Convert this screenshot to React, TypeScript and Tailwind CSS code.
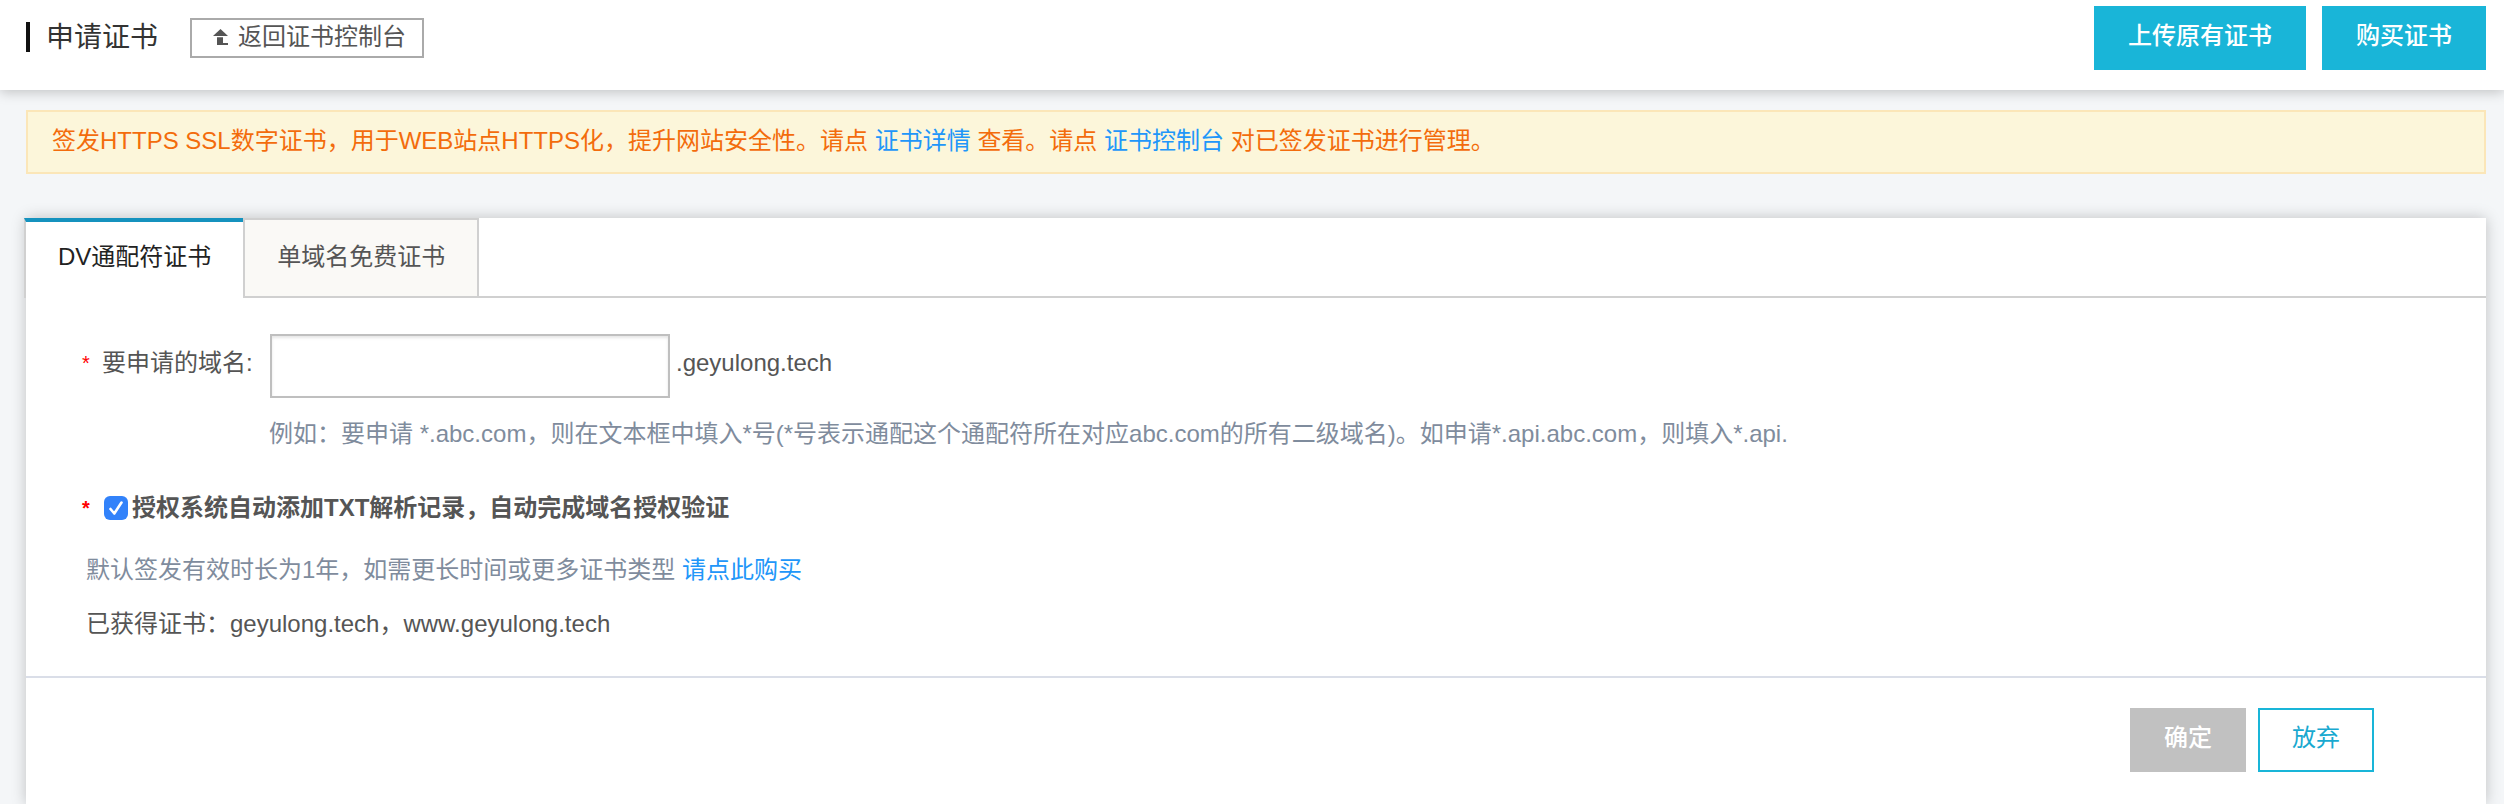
import { useState } from "react";
import type { ReactNode } from "react";

function BackIcon() {
  return (
    <svg width="15" height="16" viewBox="0 0 15 16" fill="currentColor" aria-hidden="true">
      <path d="M7.5 0L15 7H0Z" />
      <path d="M4 8.3H10V14H15V16H4Z" />
    </svg>
  );
}

function TextLink({ children }: { children: ReactNode }) {
  return (
    <a href="#" className="text-[#2196f9]">
      {children}
    </a>
  );
}

function Header() {
  return (
    <header className="relative flex h-[90px] items-start justify-between bg-white pr-[18px] pl-[26px] shadow-[0_2px_12px_rgba(0,0,0,0.22)]">
      <div className="flex items-center pt-[18px]">
        <span className="-mt-0.5 h-[30px] w-1 bg-[#111]" />
        <h1 className="ml-4 text-[28px] leading-9 text-[#333]">申请证书</h1>
        <a
          href="#"
          className="ml-8 flex h-10 items-center gap-2.5 border-2 border-[#aaa] pr-4 pb-0.5 pl-[21px] leading-8 text-[#555]"
        >
          <BackIcon />
          返回证书控制台
        </a>
      </div>
      <div className="flex gap-4 pt-1.5">
        <button type="button" className="h-16 bg-[#19b5d8] px-[34px] pb-1 font-medium text-white">
          上传原有证书
        </button>
        <button type="button" className="h-16 bg-[#19b5d8] px-[34px] pb-1 font-medium text-white">
          购买证书
        </button>
      </div>
    </header>
  );
}

export default function App() {
  const [tab, setTab] = useState(0);
  const [domain, setDomain] = useState("");
  const [authorized, setAuthorized] = useState(true);
  const tabs = ["DV通配符证书", "单域名免费证书"];

  return (
    <div className="flex min-h-screen flex-col bg-[#f4f6f8] font-['Liberation_Sans','Noto_Sans_CJK_SC',sans-serif] text-[24px] leading-8 text-[#555]">
      <Header />
      <main className="flex grow flex-col pt-5 pr-[18px] pl-[26px]">
        <p className="border-2 border-[#fbe6b8] bg-[#fcf6da] px-6 pt-[13px] pb-[15px] text-[#f36c0c]">
          签发HTTPS SSL数字证书，用于WEB站点HTTPS化，提升网站安全性。请点 <TextLink>证书详情</TextLink>{" "}
          查看。请点 <TextLink>证书控制台</TextLink> 对已签发证书进行管理。
        </p>

        <section className="mt-11 grow bg-white shadow-[0_0_14px_rgba(0,0,0,0.22)]">
          <div role="tablist" className="-ml-0.5 flex h-20">
            {tabs.map((name, i) => (
              <button
                key={name}
                type="button"
                role="tab"
                aria-selected={tab === i}
                onClick={() => setTab(i)}
                className={
                  tab === i
                    ? "border-t-4 border-l-2 border-t-[#1592be] border-l-[#d0d0d0] px-8 pb-1.5 text-[#222]"
                    : "border-2 border-[#d0d0d0] bg-[#faf9f6] px-8 pb-0.5 text-[#555]"
                }
              >
                {name}
              </button>
            ))}
            <div className="grow border-b-2 border-[#d0d0d0]" />
          </div>

          <form onSubmit={(e) => e.preventDefault()}>
            <div className="pt-9 pl-14">
              <div className="flex items-center">
                <span className="w-2 pb-1.5 text-[20px] text-[#f00]">*</span>
                <label htmlFor="domain" className="ml-3 w-42 pb-1.5">
                  要申请的域名:
                </label>
                <input
                  id="domain"
                  type="text"
                  value={domain}
                  onChange={(e) => setDomain(e.target.value)}
                  className="h-16 w-[400px] border-2 border-[#bfbfbf] bg-white px-3 shadow-[inset_0_2px_3px_rgba(0,0,0,0.1)] outline-none"
                />
                <span className="ml-1.5 pb-1.5">.geyulong.tech</span>
              </div>
              <p className="mt-5 ml-[187px] text-[#7f8c9d]">
                例如：要申请 *.abc.com，则在文本框中填入*号(*号表示通配这个通配符所在对应abc.com的所有二级域名)。如申请*.api.abc.com，则填入*.api.
              </p>
              <div className="mt-[42px] flex items-center font-bold">
                <span className="w-2 text-[20px] text-[#f00]">*</span>
                <span className="relative ml-3.5 size-6">
                  <input
                    id="authorize"
                    type="checkbox"
                    checked={authorized}
                    onChange={(e) => setAuthorized(e.target.checked)}
                    className="peer block size-6 appearance-none rounded-md border-2 border-[#bfbfbf] bg-white checked:border-0 checked:bg-[#3282fa]"
                  />
                  <svg
                    viewBox="0 0 24 24"
                    className="pointer-events-none absolute inset-0 hidden size-6 peer-checked:block"
                    fill="none"
                    stroke="white"
                    strokeWidth="2.6"
                    strokeLinecap="round"
                    strokeLinejoin="round"
                    aria-hidden="true"
                  >
                    <path d="M6.5 13L10.3 17.5L17.5 6.5" />
                  </svg>
                </span>
                <label htmlFor="authorize" className="ml-1">
                  授权系统自动添加TXT解析记录，自动完成域名授权验证
                </label>
              </div>
              <p className="mt-[30px] ml-1 text-[#7f8c9d]">
                默认签发有效时长为1年，如需更长时间或更多证书类型 <TextLink>请点此购买</TextLink>
              </p>
              <p className="mt-[22px] ml-1">已获得证书：geyulong.tech，www.geyulong.tech</p>
            </div>
            <div className="mt-9 flex justify-end gap-3 border-t-2 border-[#dadee8] pt-[30px] pr-28">
              <button type="submit" className="h-16 bg-[#c1c1c1] px-[34px] pb-1 font-medium text-white">
                确定
              </button>
              <button type="button" className="h-16 border-2 border-[#19b5d8] bg-white px-8 pb-1 text-[#19a9d0]">
                放弃
              </button>
            </div>
          </form>
        </section>
      </main>
    </div>
  );
}
